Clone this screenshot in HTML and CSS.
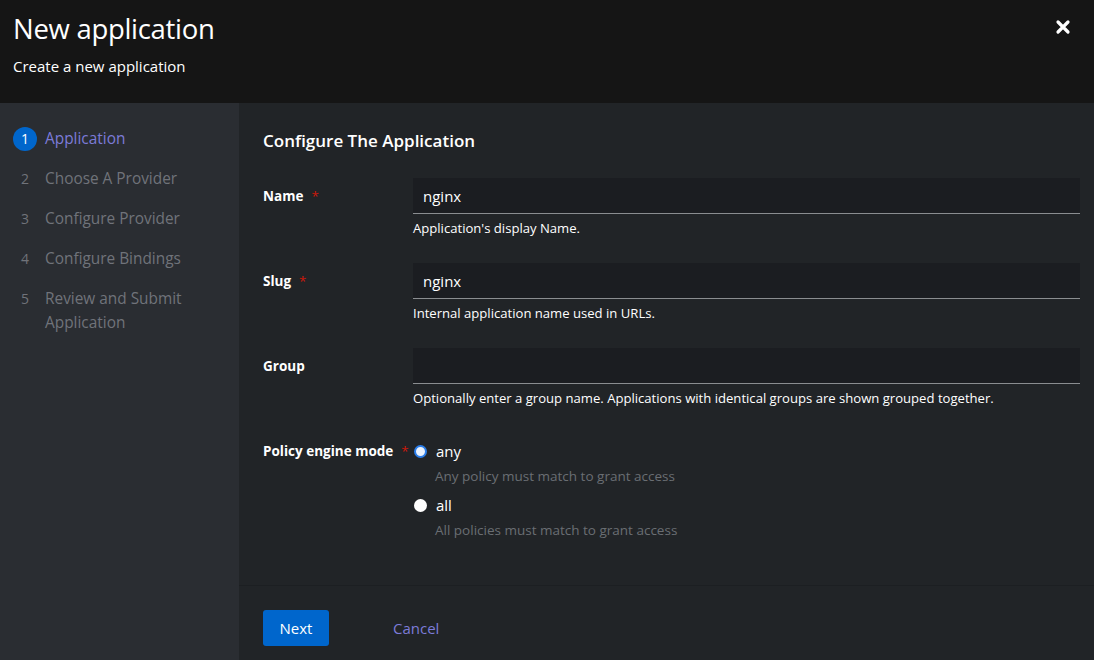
FILE: index.html
```html
<!DOCTYPE html>
<html>
<head>
<meta charset="utf-8">
<link rel="stylesheet" href="styles.css">
</head>
<body>
<div class="modal">
  <header class="head">
    <div class="head-text">
      <h1 class="title">New application</h1>
      <p class="subtitle">Create a new application</p>
    </div>
    <button class="close" aria-label="Close">
      <svg width="16" height="16" viewBox="0 0 16 16"><path d="M3 3 L13 13 M13 3 L3 13" stroke="#fff" stroke-width="3.2" stroke-linecap="round"/></svg>
    </button>
  </header>
  <div class="body">
    <nav class="nav">
      <div class="step current"><span class="num">1</span><span class="label">Application</span></div>
      <div class="step"><span class="num">2</span><span class="label">Choose A Provider</span></div>
      <div class="step"><span class="num">3</span><span class="label">Configure Provider</span></div>
      <div class="step"><span class="num">4</span><span class="label">Configure Bindings</span></div>
      <div class="step"><span class="num">5</span><span class="label">Review and Submit<br>Application</span></div>
    </nav>
    <main class="main">
      <div class="content">
        <h2 class="section">Configure The Application</h2>
        <div class="row">
          <div class="flabel">Name<span class="req">*</span></div>
          <div class="field">
            <div class="input">nginx</div>
            <div class="help">Application's display Name.</div>
          </div>
        </div>
        <div class="row">
          <div class="flabel">Slug<span class="req">*</span></div>
          <div class="field">
            <div class="input">nginx</div>
            <div class="help">Internal application name used in URLs.</div>
          </div>
        </div>
        <div class="row">
          <div class="flabel">Group</div>
          <div class="field">
            <div class="input"></div>
            <div class="help">Optionally enter a group name. Applications with identical groups are shown grouped together.</div>
          </div>
        </div>
        <div class="row radio-row">
          <div class="flabel">Policy engine mode<span class="req">*</span></div>
          <div class="field">
            <div class="radio">
              <span class="dot checked"></span><span class="rlabel">any</span>
            </div>
            <div class="rdesc">Any policy must match to grant access</div>
            <div class="radio">
              <span class="dot"></span><span class="rlabel">all</span>
            </div>
            <div class="rdesc">All policies must match to grant access</div>
          </div>
        </div>
      </div>
      <footer class="foot">
        <button class="btn-primary">Next</button>
        <button class="btn-link">Cancel</button>
      </footer>
    </main>
  </div>
</div>
</body>
</html>
```
FILE: styles.css
```css
* { box-sizing: border-box; }
html, body { margin: 0; padding: 0; }
body {
  width: 1094px;
  height: 660px;
  overflow: hidden;
  background: #212427;
  font-family: "Open Sans", "Liberation Sans", sans-serif;
  color: #fff;
}
.modal { display: flex; flex-direction: column; height: 660px; }
.head {
  height: 103px;
  background: #151515;
  display: flex;
  justify-content: space-between;
  padding: 11px 22px 0 13px;
}
.title {
  margin: 0;
  font-size: 27.5px;
  font-weight: 400;
  line-height: 36px;
  letter-spacing: -0.3px;
}
.subtitle {
  margin: 9px 0 0;
  font-size: 15px;
  line-height: 20px;
}
.close {
  background: none;
  border: 0;
  padding: 0;
  width: 18px;
  height: 18px;
  margin-top: 7px;
  display: flex;
  align-items: center;
  justify-content: center;
}
.body { flex: 1; display: flex; min-height: 0; }
.nav {
  width: 239px;
  background: #2a2d32;
  padding: 24px 0 0 13px;
  display: flex;
  flex-direction: column;
  gap: 16px;
}
.step {
  display: flex;
  align-items: flex-start;
  font-size: 15.4px;
  line-height: 24px;
  color: #70737a;
}
.num {
  width: 24px;
  height: 24px;
  display: flex;
  align-items: center;
  justify-content: center;
  margin-right: 8px;
  font-size: 14px;
  flex: none;
}
.step.current .num {
  background: #0066cc;
  color: #fff;
  border-radius: 50%;
}
.step.current .label { color: #7c7bd8; }
.main {
  flex: 1;
  display: flex;
  flex-direction: column;
  background: #212427;
}
.content { flex: 1; padding: 24px 14px 0 24px; }
.section {
  margin: 0 0 23px;
  font-size: 17px;
  font-weight: 600;
  line-height: 28px;
}
.row {
  display: flex;
  margin-bottom: 26px;
}
.flabel {
  width: 150px;
  flex: none;
  font-size: 13.5px;
  font-weight: 700;
  padding-top: 9px;
  line-height: 18px;
}
.req { color: #c9190b; margin-left: 8px; font-weight: 400; }
.field { flex: 1; }
.input {
  height: 36px;
  background: #1b1d21;
  border-bottom: 1px solid #8a8d90;
  padding: 0 10px;
  font-size: 15px;
  line-height: 36px;
  color: #fff;
}
.help {
  margin-top: 5px;
  font-size: 13.1px;
  line-height: 18px;
  color: #fff;
}
.radio-row { margin-top: 34px; }
.radio-row .flabel { padding-top: 1px; }
.radio {
  display: flex;
  align-items: center;
  height: 20px;
}
.dot {
  width: 13px;
  height: 13px;
  border-radius: 50%;
  background: #fff;
  margin-right: 9px;
  margin-left: 1px;
  flex: none;
}
.dot.checked {
  border: 2.5px solid #2b7de9;
  background: #eaf2fd;
}
.rlabel { font-size: 15px; }
.rdesc {
  margin: 6px 0 10px 22px;
  font-size: 13.5px;
  line-height: 18px;
  color: #6a6e73;
}
.foot {
  height: 75px;
  border-top: 1px solid #1c1f22;
  display: flex;
  align-items: flex-start;
  padding: 24px 0 0 24px;
}
.btn-primary {
  width: 66px;
  height: 36px;
  background: #0066cc;
  color: #fff;
  border: 0;
  border-radius: 3px;
  font-family: inherit;
  font-size: 15px;
}
.btn-link {
  margin-left: 50px;
  height: 36px;
  background: none;
  border: 0;
  color: #7c7bd8;
  font-family: inherit;
  font-size: 15px;
  padding: 0 14px;
}
```
